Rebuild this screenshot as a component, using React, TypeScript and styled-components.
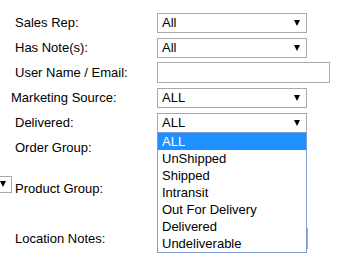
import React from "react";
import styled, { createGlobalStyle } from "styled-components";

const GlobalStyle = createGlobalStyle`
  body {
    margin: 0;
    background: #fff;
    font-family: "Liberation Sans", Arial, sans-serif;
  }
`;

const deliveryOptions = [
  "ALL",
  "UnShipped",
  "Shipped",
  "Intransit",
  "Out For Delivery",
  "Delivered",
  "Undeliverable",
];

const App = () => {
  return (
    <>
      <GlobalStyle />
      <Form>
        <Row $h={25}>
          <Label $indent={15}>Sales Rep:</Label>
          <Select>
            <span>All</span>
            <Arrow />
          </Select>
        </Row>
        <Row $h={25}>
          <Label $indent={15}>Has Note(s):</Label>
          <Select>
            <span>All</span>
            <Arrow />
          </Select>
        </Row>
        <Row $h={25}>
          <Label $indent={15}>User Name / Email:</Label>
          <TextInput />
        </Row>
        <Row $h={25}>
          <Label $indent={11}>Marketing Source:</Label>
          <Select>
            <span>ALL</span>
            <Arrow />
          </Select>
        </Row>
        <Row $h={25}>
          <Label $indent={15}>Delivered:</Label>
          <SelectWrap>
            <Select>
              <span>ALL</span>
              <Arrow />
            </Select>
            <Dropdown>
              {deliveryOptions.map((item, index) => (
                <Option key={index} $active={index === 0}>
                  {item}
                </Option>
              ))}
            </Dropdown>
          </SelectWrap>
        </Row>
        <Row $h={25}>
          <Label $indent={15}>Order Group:</Label>
          {/* hidden under the open dropdown */}
          <Select />
        </Row>
        <Row $h={56}>
          <LabelCell>
            <ClippedSelect>
              <Arrow />
            </ClippedSelect>
            <LabelText>Product Group:</LabelText>
          </LabelCell>
          <Select />
        </Row>
        <Row $h={44}>
          <Label $indent={15}>Location Notes:</Label>
          <NotesField />
        </Row>
      </Form>
    </>
  );
};

const Form = styled.div`
  display: flex;
  flex-direction: column;
  padding-top: 10px;
  width: 354px;
  height: 261px;
  box-sizing: border-box;
  overflow: hidden;
`;

const Row = styled.div<{ $h: number }>`
  display: flex;
  align-items: center;
  height: ${(p) => p.$h}px;
  flex-shrink: 0;
`;

const Label = styled.div<{ $indent: number }>`
  width: 157px;
  flex-shrink: 0;
  box-sizing: border-box;
  padding-left: ${(p) => p.$indent}px;
  font-size: 13px;
  color: #000;
  white-space: nowrap;
`;

const LabelCell = styled.div`
  width: 157px;
  flex-shrink: 0;
  display: flex;
  align-items: center;
  gap: 3px;
`;

const LabelText = styled.span`
  font-size: 13px;
  color: #000;
`;

const ClippedSelect = styled.div`
  width: 12px;
  height: 17px;
  box-sizing: border-box;
  border: 1px solid #a9a9a9;
  border-left: none;
  display: flex;
  align-items: center;
  margin-bottom: 8px;
`;

const SelectWrap = styled.div`
  position: relative;
`;

const Select = styled.div`
  width: 150px;
  height: 20px;
  box-sizing: border-box;
  border: 1px solid #a9a9a9;
  background: #fff;
  padding: 0 6px 0 4px;
  display: flex;
  align-items: center;
  justify-content: space-between;
  font-size: 13px;
  color: #000;
`;

const Arrow = styled.i`
  display: block;
  width: 0;
  height: 0;
  border-left: 3.5px solid transparent;
  border-right: 3.5px solid transparent;
  border-top: 6px solid #000;
`;

const TextInput = styled.div`
  width: 173px;
  height: 21px;
  box-sizing: border-box;
  border: 1px solid #a9a9a9;
  background: #fff;
`;

const NotesField = styled.div`
  width: 151px;
  height: 21px;
  box-sizing: border-box;
  border: 1px solid #a9a9a9;
  background: #fff;
`;

const Dropdown = styled.div`
  position: absolute;
  top: calc(100% - 1px);
  left: 0;
  width: 150px;
  box-sizing: border-box;
  border: 1px solid #7a9bd6;
  background: #fff;
  z-index: 2;
`;

const Option = styled.div<{ $active?: boolean }>`
  height: 17px;
  line-height: 17px;
  padding-left: 4px;
  font-size: 13px;
  color: ${(p) => (p.$active ? "#fff" : "#000")};
  background: ${(p) => (p.$active ? "#1e90ff" : "transparent")};
  white-space: nowrap;
`;

export default App;
